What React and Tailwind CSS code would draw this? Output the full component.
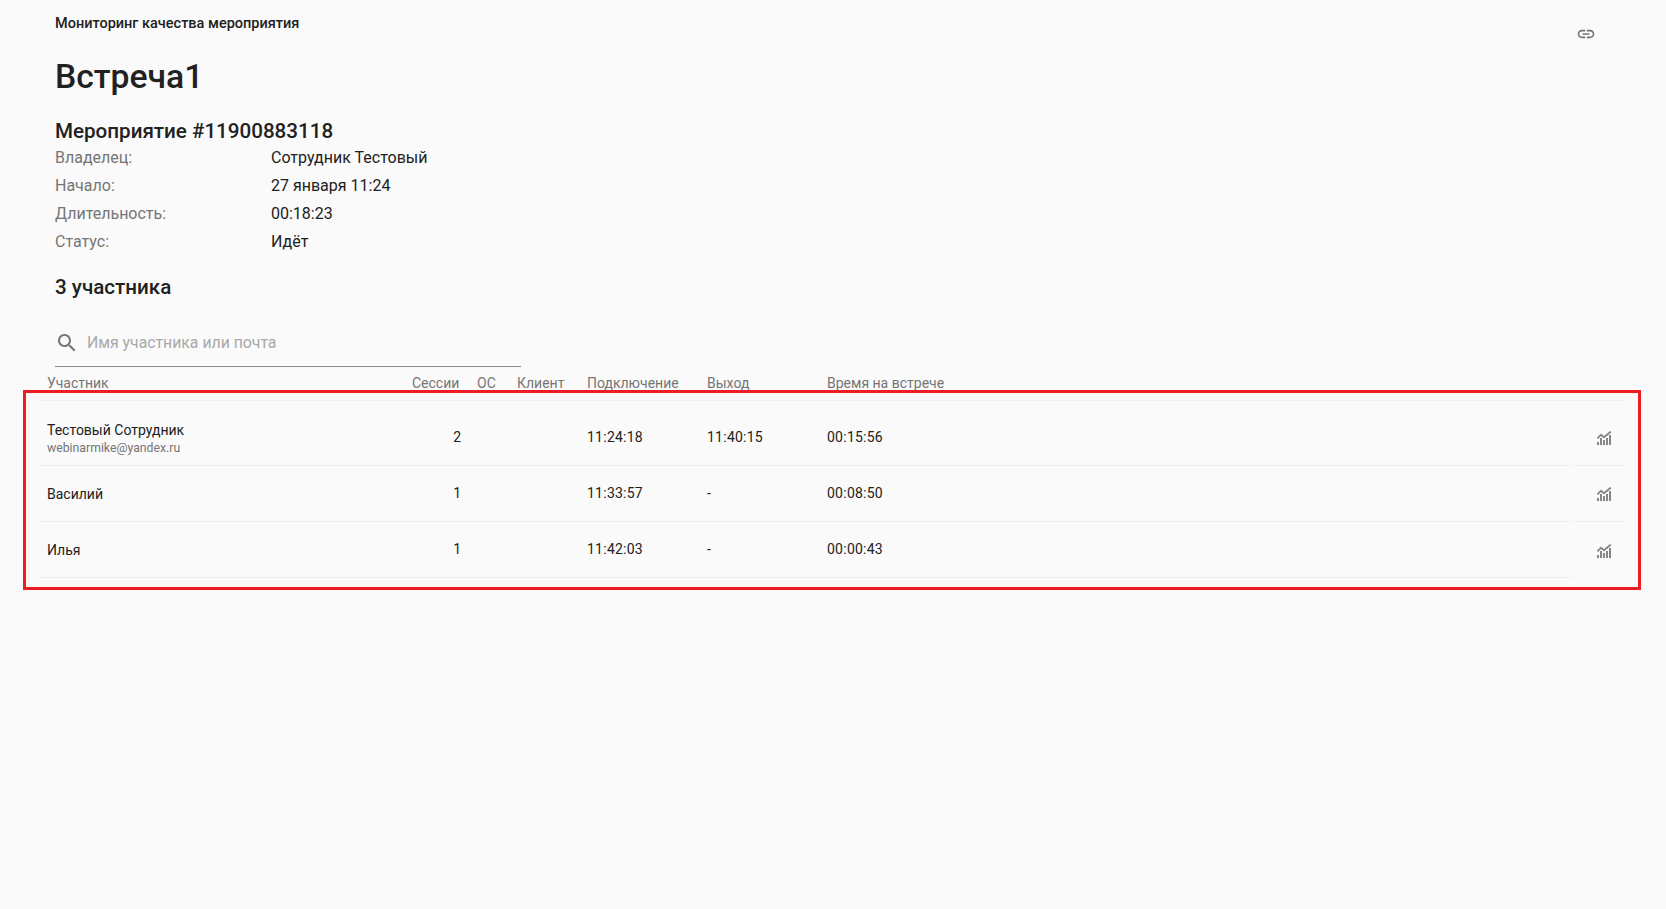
import React from 'react';

const rows = [
  { name: 'Тестовый Сотрудник', email: 'webinarmike@yandex.ru', sessions: 2, join: '11:24:18', exit: '11:40:15', time: '00:15:56' },
  { name: 'Василий', sessions: 1, join: '11:33:57', exit: '-', time: '00:08:50' },
  { name: 'Илья', sessions: 1, join: '11:42:03', exit: '-', time: '00:00:43' },
];

const info = [
  ['Владелец:', 'Сотрудник Тестовый'],
  ['Начало:', '27 января 11:24'],
  ['Длительность:', '00:18:23'],
  ['Статус:', 'Идёт'],
];

function ChartIcon() {
  return (
    <svg width="15" height="14" viewBox="0 0 15 14" className="text-[#858585]" fill="currentColor">
      <path d="M0 6.5 L4 2.5 L7 5 L13 0 L14.5 1.2 L7 7.5 L4 5 L1 8.2 Z" />
      <rect x="0" y="11" width="2" height="3" />
      <rect x="3" y="7" width="2" height="7" />
      <rect x="6" y="9" width="2" height="5" />
      <rect x="9" y="7" width="2" height="7" />
      <rect x="12" y="4" width="2" height="10" />
    </svg>
  );
}

export default function App() {
  return (
    <div className="relative min-h-[909px] bg-[#fafafa] font-['Roboto',sans-serif] text-[#212121]">
      <div className="flex justify-between pl-[55px] pr-[70px] pt-[15px]">
        <div className="text-[14.5px] leading-[18px] font-medium">Мониторинг качества мероприятия</div>
        <svg width="20" height="20" viewBox="0 0 24 24" fill="#757575" className="mt-[9px]">
          <path d="M3.9 12c0-1.71 1.39-3.1 3.1-3.1h4V7H7c-2.76 0-5 2.24-5 5s2.24 5 5 5h4v-1.9H7c-1.71 0-3.1-1.39-3.1-3.1zM8 13h8v-2H8v2zm9-6h-4v1.9h4c1.71 0 3.1 1.39 3.1 3.1s-1.39 3.1-3.1 3.1h-4V17h4c2.76 0 5-2.24 5-5s-2.24-5-5-5z" />
        </svg>
      </div>

      <div className="pl-[55px] mt-[13px]">
        <h1 className="text-[33.7px] leading-[40px] font-medium">Встреча1</h1>
        <h2 className="mt-[20px] text-[20.6px] leading-[28px] font-medium">Мероприятие #11900883118</h2>
        <div className="-mt-[1px] text-[16px] leading-[28px]">
          {info.map(([k, v]) => (
            <div key={k} className="flex">
              <span className="w-[216px] text-[#757575]">{k}</span>
              <span>{v}</span>
            </div>
          ))}
        </div>
        <h2 className="mt-[17px] text-[20.6px] leading-[28px] font-medium">3 участника</h2>

        <div className="mt-[18px] flex h-[48px] w-[466px] items-center border-b border-[#8c8c8c]">
          <svg width="24" height="24" viewBox="0 0 24 24" fill="#757575">
            <path d="M15.5 14h-.79l-.28-.27C15.41 12.59 16 11.11 16 9.5 16 5.91 13.09 3 9.5 3S3 5.91 3 9.5 5.91 16 9.5 16c1.61 0 3.09-.59 4.23-1.57l.27.28v.79l5 4.99L20.49 19l-4.99-5zm-6 0C7.01 14 5 11.99 5 9.5S7.01 5 9.5 5 14 7.01 14 9.5 11.99 14 9.5 14z" />
          </svg>
          <span className="ml-[8px] text-[15.8px] text-[#a8a8a8]">Имя участника или почта</span>
        </div>
      </div>

      <div className="ml-[38px] w-[1586px]">
        <div className="flex h-[34px] border-b border-[#eeeeee] pl-[9px] pt-[6px] text-[14px] leading-[20px] text-[#757575]">
          <span className="w-[365px]">Участник</span>
          <span className="w-[65px]">Сессии</span>
          <span className="w-[40px]">ОС</span>
          <span className="w-[70px]">Клиент</span>
          <span className="w-[120px]">Подключение</span>
          <span className="w-[120px]">Выход</span>
          <span>Время на встрече</span>
        </div>
        {rows.map((r, i) => (
          <div key={r.name} className={`flex gap-[3px] text-[14px] ${r.email ? 'h-[65px]' : 'h-[56px]'}`}>
            <div className={`flex flex-1 items-center border-b border-[#eeeeee] pl-[9px] ${r.email ? 'pt-[8px]' : ''}`}>
              <div className={`w-[365px] leading-[18px] ${r.email ? 'pt-[3px]' : ''}`}>
                <div>{r.name}</div>
                {r.email && <div className="text-[12.25px] leading-[18px] text-[#757575]">{r.email}</div>}
              </div>
              <span className="w-[65px] pr-[16px] text-right">{r.sessions}</span>
              <span className="w-[110px]" />
              <span className="w-[120px] tracking-[0.25px]">{r.join}</span>
              <span className="w-[120px] tracking-[0.25px]">{r.exit}</span>
              <span className="tracking-[0.25px]">{r.time}</span>
            </div>
            <div className={`flex w-[48px] items-center justify-center pl-[8px] ${r.email ? 'pt-[10px]' : 'pt-[1px]'} ${i < rows.length - 1 ? 'border-b border-[#eeeeee]' : ''}`}>
              <ChartIcon />
            </div>
          </div>
        ))}
      </div>

      {/* red annotation frame */}
      <div className="absolute left-[23px] top-[390px] h-[200px] w-[1618px] border-[3px] border-[#ed1c24]" />
    </div>
  );
}
